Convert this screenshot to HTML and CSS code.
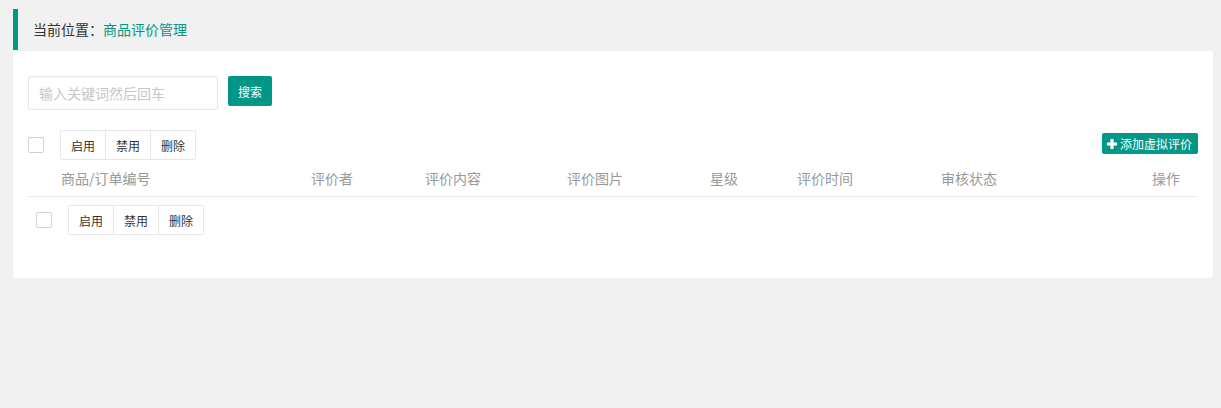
FILE: index.html
```html
<!DOCTYPE html>
<html lang="zh">
<head>
<meta charset="utf-8">
<title>商品评价管理</title>
<link rel="stylesheet" href="styles.css">
</head>
<body>
<div class="page">
  <div class="crumb">当前位置：<a class="crumb-link">商品评价管理</a></div>
  <div class="card">
    <div class="search-row">
      <input class="search-input" type="text" placeholder="输入关键词然后回车">
      <button class="btn-primary">搜索</button>
    </div>
    <div class="toolbar">
      <div class="toolbar-left">
        <span class="checkbox"></span>
        <div class="btn-group">
          <button class="btn">启用</button>
          <button class="btn">禁用</button>
          <button class="btn">删除</button>
        </div>
      </div>
      <button class="btn-add"><svg class="plus" viewBox="0 0 10 10" width="10" height="10"><path d="M3.4 0h3.2v3.4H10v3.2H6.6V10H3.4V6.6H0V3.4h3.4z" fill="#fff"/></svg>添加虚拟评价</button>
    </div>
    <div class="table-head">
      <span></span>
      <span>商品/订单编号</span>
      <span>评价者</span>
      <span>评价内容</span>
      <span>评价图片</span>
      <span>星级</span>
      <span>评价时间</span>
      <span>审核状态</span>
      <span class="right">操作</span>
    </div>
    <div class="table-foot">
      <span class="checkbox"></span>
      <div class="btn-group">
        <button class="btn">启用</button>
        <button class="btn">禁用</button>
        <button class="btn">删除</button>
      </div>
    </div>
  </div>
</div>
</body>
</html>
```

FILE: styles.css
```css
* { box-sizing: border-box; }
html, body {
  margin: 0;
  background: #f1f1f1;
  font-family: "Noto Sans CJK SC", "Noto Sans", sans-serif;
  color: #333;
}
.page {
  padding: 9px 8px 0 13px;
}
.crumb {
  height: 41px;
  line-height: 41px;
  border-left: 5px solid #009688;
  padding-left: 15px;
  font-size: 14px;
  color: #333;
}
.crumb-link {
  color: #009688;
}
.card {
  margin-top: 1px;
  background: #fff;
  padding: 25px 15px 35px 15px;
  box-shadow: 0 1px 2px rgba(0,0,0,0.06);
  border-radius: 2px;
}
.search-row {
  display: flex;
  align-items: flex-start;
  gap: 10px;
}
.search-input {
  width: 190px;
  height: 34px;
  border: 1px solid #e6e6e6;
  border-radius: 2px;
  padding: 0 10px;
  font-size: 14px;
  font-family: inherit;
  color: #333;
  outline: none;
}
.search-input::placeholder {
  color: #c6c6c6;
}
.btn-primary {
  height: 30px;
  width: 44px;
  padding: 0;
  border: none;
  border-radius: 2px;
  background: #009688;
  color: #fff;
  font-size: 12px;
  font-family: inherit;
  font-weight: normal;
}
.toolbar {
  margin-top: 20px;
  display: flex;
  align-items: center;
  justify-content: space-between;
  height: 30px;
}
.toolbar-left {
  display: flex;
  align-items: center;
  gap: 16px;
}
.checkbox {
  display: block;
  width: 16px;
  height: 16px;
  border: 1px solid #d2d2d2;
  border-radius: 2px;
  background: #fff;
}
.btn-group {
  display: flex;
  border: 1px solid #e6e6e6;
  border-radius: 2px;
  height: 30px;
}
.btn {
  height: 28px;
  width: 44px;
  padding: 0;
  border: none;
  background: #fff;
  font-size: 12px;
  font-family: inherit;
  color: #333;
}
.btn + .btn {
  border-left: 1px solid #e6e6e6;
  width: 45px;
}
.btn-add {
  display: flex;
  align-items: center;
  gap: 3px;
  height: 21px;
  width: 96px;
  margin-top: -3px;
  padding: 0 0 0 5px;
  border: none;
  border-radius: 2px;
  background: #009688;
  color: #fff;
  font-size: 12px;
  font-family: inherit;
  font-weight: normal;
  white-space: nowrap;
}
.plus {
  flex: none;
}
.table-head {
  display: grid;
  grid-template-columns: 33px 250px 114px 142px 143px 87px 144px 1fr auto;
  align-items: center;
  height: 37px;
  border-bottom: 1px solid #e8e8e8;
  font-size: 14px;
  color: #999;
  margin-right: 1px;
}
.table-head .right {
  padding-right: 17px;
}
.table-foot {
  display: flex;
  align-items: center;
  gap: 16px;
  padding: 8px;
}
```
